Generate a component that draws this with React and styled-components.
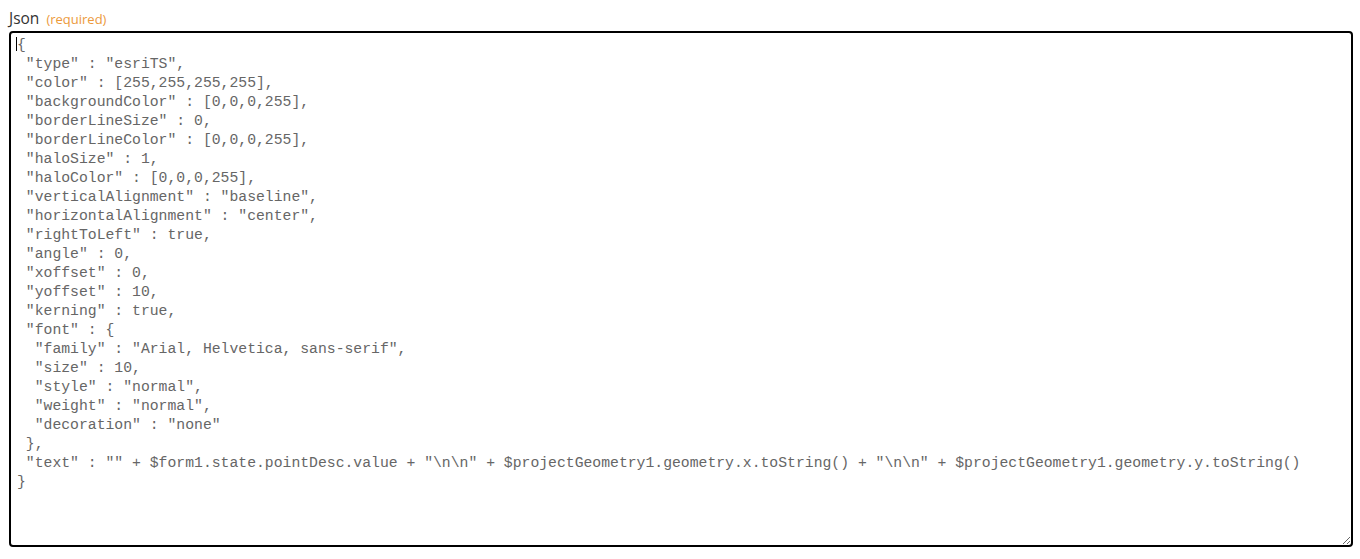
import React from "react";
import styled, { createGlobalStyle } from "styled-components";

const GlobalStyle = createGlobalStyle`
  html, body {
    margin: 0;
    padding: 0;
    background: #ffffff;
  }
`;

const Form = styled.div`
  padding: 8px 7px 0 9px;
  font-family: "Open Sans", "Noto Sans", sans-serif;
`;

const Label = styled.label`
  display: flex;
  align-items: baseline;
  gap: 7px;
  height: 20px;
  line-height: 20px;
  margin-bottom: 3px;
`;

const LabelText = styled.span`
  font-size: 15.5px;
  color: #333333;
`;

const Required = styled.span`
  font-size: 13px;
  color: #ec9a3c;
`;

const Field = styled.div`
  position: relative;
`;

const Editor = styled.textarea`
  display: block;
  box-sizing: border-box;
  width: 100%;
  height: 516px;
  margin: 0;
  padding: 3px 6px;
  border: 2px solid #000000;
  border-radius: 4px;
  outline: none;
  background: #ffffff;
  color: #666666;
  font-family: "Liberation Mono", "Courier New", monospace;
  font-size: 14.76px;
  line-height: 19px;
  white-space: pre;
  overflow: hidden;
  caret-color: transparent;
  resize: both;
`;

const Caret = styled.span`
  position: absolute;
  left: 7px;
  top: 6px;
  width: 1px;
  height: 14px;
  background: #000000;
`;

const json = String.raw`{
 "type" : "esriTS",
 "color" : [255,255,255,255],
 "backgroundColor" : [0,0,0,255],
 "borderLineSize" : 0,
 "borderLineColor" : [0,0,0,255],
 "haloSize" : 1,
 "haloColor" : [0,0,0,255],
 "verticalAlignment" : "baseline",
 "horizontalAlignment" : "center",
 "rightToLeft" : true,
 "angle" : 0,
 "xoffset" : 0,
 "yoffset" : 10,
 "kerning" : true,
 "font" : {
  "family" : "Arial, Helvetica, sans-serif",
  "size" : 10,
  "style" : "normal",
  "weight" : "normal",
  "decoration" : "none"
 },
 "text" : "" + $form1.state.pointDesc.value + "\n\n" + $projectGeometry1.geometry.x.toString() + "\n\n" + $projectGeometry1.geometry.y.toString()
}`;

const App = () => {
  return (
    <>
      <GlobalStyle />
      <Form>
        <Label>
          <LabelText>Json</LabelText>
          <Required>(required)</Required>
        </Label>
        <Field>
          <Editor defaultValue={json} spellCheck={false} />
          <Caret />
        </Field>
      </Form>
    </>
  );
};

export default App;
